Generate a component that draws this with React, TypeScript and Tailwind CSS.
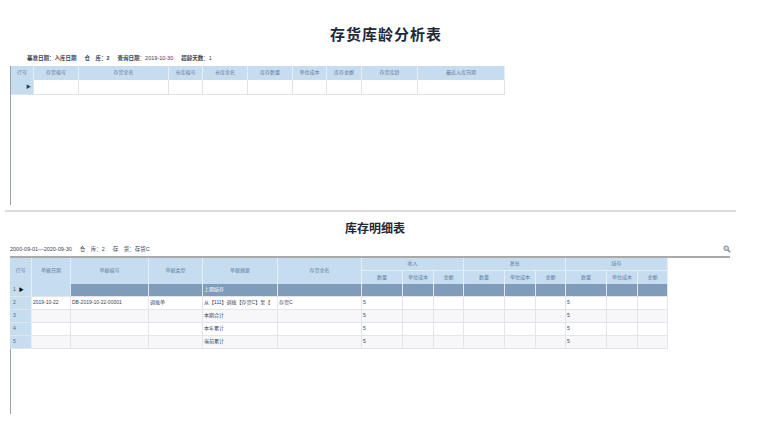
import React from "react";

const f = { fontFamily: '"Liberation Sans","Noto Sans CJK SC",sans-serif' };
const serif = { fontFamily: '"Noto Sans CJK SC",serif' };

const topCols = [["行号",23],["存货编号",45],["存货全名",90],["仓库编号",34],["仓库全名",45],["库存数量",45],["单位成本",34],["库存金额",35],["存货库龄",56],["最近入库日期",87]] as const;
const leftCols = [["行号",22],["单据日期",39],["单据编号",78],["单据类型",54],["单据摘要",75],["存货全名",84]] as const;
const sub = [41,31,30];
const rows = [
  ["1","","","","上期结存","",""],
  ["2","2019-10-22","DB-2019-10-22-00001","调拨单","从【111】调拨【存货C】至【","5"],
  ["3","","","","本期合计","","5"],
  ["4","","","","本年累计","","5"],
  ["5","","","","当前累计","","5"],
];

export default function App() {
  return (
    <div className="w-[759px] h-[444px] bg-white relative overflow-hidden text-[5px] text-gray-700" style={f}>
      <div className="absolute left-[330px] top-[23px] text-[15px] font-bold text-gray-800 tracking-[1px]" style={serif}>存货库龄分析表</div>
      <div className="absolute left-[27px] top-[54px] text-[5.5px] flex gap-[8px]"><span className="font-bold">基准日期：入库日期</span><span className="font-bold">仓　库：2</span><span><b>查询日期</b>：2019-10-30</span><span><b>超龄天数</b>：1</span></div>
      <div className="absolute left-[10px] top-[66px] w-px h-[139px] bg-gray-400" />
      <div className="absolute left-[11px] top-[66px] flex flex-col">
        <div className="flex h-[14px] bg-[#c6dcef]">
          {topCols.map(([t,w])=>(<div key={t} style={{width:w}} className="border-r border-[#e4eef7] flex items-center justify-center text-[#5d7fa3]">{t}</div>))}
        </div>
        <div className="flex h-[15px] border-b border-[#dde3e8]">
          {topCols.map(([t,w],i)=>(<div key={t} style={{width:w}} className={`border-r border-[#dde3e8] flex items-center justify-end pr-[2px] ${i===0?"bg-[#c6dcef]":"bg-white"}`}>{i===0?"▶":""}</div>))}
        </div>
      </div>
      <div className="absolute left-[5px] top-[210px] w-[731px] h-[2px] bg-[#dcdcdc]" />
      <div className="absolute left-[345px] top-[219px] text-[12px] font-bold text-gray-800" style={serif}>库存明细表</div>
      <div className="absolute left-[10px] top-[245px] text-[5.5px] flex gap-[8px]"><span>2000-09-01—2020-09-30</span><span>仓　库：2</span><span>存　货：存货C</span></div>
      <svg className="absolute left-[723px] top-[245px]" width="8" height="8" viewBox="0 0 8 8"><circle cx="3.2" cy="3.2" r="2.3" fill="#cfd8e0" stroke="#7a8a99" strokeWidth="1"/><path d="M5 5L7.3 7.3" stroke="#7a8a99" strokeWidth="1.4"/></svg>
      <div className="absolute left-[10px] top-[256px] w-[720px] h-[2px] bg-[#a9a9a9]" />
      <div className="absolute left-[10px] top-[258px] w-px h-[156px] bg-gray-400" />
      <div className="absolute left-[10px] top-[258px] flex flex-col">
        <div className="flex h-[26px] bg-[#c6dcef] text-[#5d7fa3]">
          {leftCols.map(([t,w])=>(<div key={t} style={{width:w}} className="border-r border-[#e4eef7] flex items-center justify-center">{t}</div>))}
          {["收入","发出","结存"].map(g=>(
            <div key={g} className="flex flex-col">
              <div className="h-[13px] flex items-center justify-center border-b border-r border-[#e4eef7]">{g}</div>
              <div className="flex h-[13px]">{["数量","单位成本","金额"].map((s,i)=>(<div key={s} style={{width:sub[i]}} className="flex items-center justify-center border-r border-[#e4eef7]">{s}</div>))}</div>
            </div>))}
        </div>
        {rows.map((r,ri)=>{
          const dark = ri===0;
          const qty = ri===0?"":"5";
          return (
          <div key={ri} className={`flex h-[13px] border-b border-[#e2e6ea] ${dark?"bg-[#7f9cbb] text-white":ri%2?"bg-white":"bg-[#f7f7f9]"}`}>
            <div style={{width:22}} className="bg-[#c6dcef] text-[#4a6a8a] flex items-center pl-[3px] border-r border-[#e4eef7]">{r[0]}{dark?<span className="ml-[3px] text-black">▶</span>:null}</div>
            <div style={{width:39}} className={`px-[1px] flex items-center border-r border-[#e2e6ea] ${dark?"bg-[#c6dcef]":""}`}>{r[1]}</div>
            <div style={{width:78}} className="px-[1px] flex items-center border-r border-[#e2e6ea]">{r[2]}</div>
            <div style={{width:54}} className="px-[1px] flex items-center border-r border-[#e2e6ea]">{r[3]}</div>
            <div style={{width:75}} className="px-[1px] flex items-center border-r border-[#e2e6ea] whitespace-nowrap overflow-hidden">{r[4]}</div>
            <div style={{width:84}} className="px-[1px] flex items-center border-r border-[#e2e6ea]">{ri===1?"存货C":""}</div>
            {[0,1,2].map(g=>sub.map((w,i)=>(<div key={g+"-"+i} style={{width:w}} className="px-[1px] flex items-center border-r border-[#e2e6ea]">{(g!==1&&i===0)?qty:""}</div>)))}
          </div>);
        })}
      </div>
    </div>
  );
}
